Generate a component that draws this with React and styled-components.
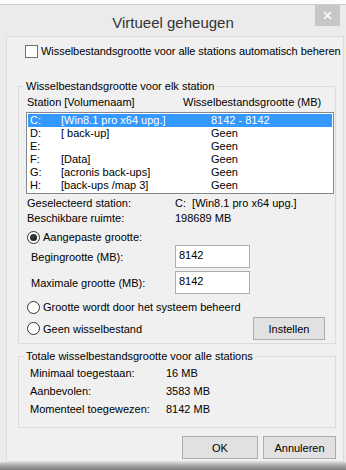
import React from "react";
import styled, { createGlobalStyle } from "styled-components";

const GlobalStyle = createGlobalStyle`
  html, body { margin: 0; padding: 0; background: #fdfdfd; }
  body { font-family: "Liberation Sans", Arial, sans-serif; font-size: 11px; color: #000; }
  * { box-sizing: border-box; }
`;

const Screen = styled.div`
  width: 346px;
  height: 470px;
  overflow: hidden;
  padding-top: 4px;
  background: #fdfdfd;
`;

const Window = styled.div`
  height: 466px;
  background: #ebebeb;
  border-top: 1px solid #cdcdcd;
  display: flex;
  flex-direction: column;
`;

const TitleBar = styled.div`
  height: 31px;
  flex: none;
  display: grid;
  grid-template-columns: 1fr auto 1fr;
`;

const Title = styled.div`
  font-size: 15px;
  color: #333;
  padding-top: 9px;
  line-height: 18px;
`;

const CloseButton = styled.div`
  justify-self: end;
  margin-right: 6px;
  width: 25px;
  height: 21px;
  background: #c7c7c7;
  display: flex;
  align-items: center;
  justify-content: center;
`;

const Panel = styled.div`
  flex: none;
  height: 426px;
  margin: 0 2px 0 6px;
  background: #f0f0f0;
  border: 1px solid #dcdcdc;
  display: flex;
  flex-direction: column;
`;

const CheckRow = styled.div`
  margin: 8px 0 0 18px;
  height: 13px;
  display: flex;
  align-items: center;
  gap: 3px;
  line-height: 13px;
  white-space: nowrap;
  letter-spacing: -0.05px;
`;

const CheckBox = styled.span`
  width: 13px;
  height: 13px;
  flex: none;
  background: #fff;
  border: 1px solid #707070;
`;

const Group = styled.fieldset`
  margin: ${(p) => p.$top}px 0 0 11px;
  width: 318px;
  border: 1px solid #dcdcdc;
  padding: 0 0 ${(p) => p.$bottom}px 0;
  min-width: 0;
`;

const Legend = styled.legend`
  margin-left: 5px;
  padding: 0 2px;
  line-height: 14px;
`;

const GroupBody = styled.div`
  padding-left: ${(p) => p.$left}px;
`;

const HeaderRow = styled.div`
  display: grid;
  grid-template-columns: 156px 1fr;
  margin-top: 3px;
  line-height: 13px;
`;

const ListBox = styled.div`
  margin: 3px 0 0 -1px;
  width: 308px;
  background: #fff;
  border: 1px solid #828790;
  padding: 1px;
`;

const ListRow = styled.div`
  height: 13px;
  line-height: 13px;
  display: grid;
  grid-template-columns: 31px 150px 1fr;
  padding-left: 2px;
  white-space: pre;
  background: ${(p) => (p.$selected ? "#3399ff" : "transparent")};
  color: ${(p) => (p.$selected ? "#fff" : "#000")};
`;

const InfoGrid = styled.div`
  display: grid;
  grid-template-columns: ${(p) => p.$col}px 1fr;
  grid-auto-rows: ${(p) => p.$row}px;
  line-height: ${(p) => p.$row}px;
  margin-top: ${(p) => p.$top}px;
  padding-left: ${(p) => p.$left || 0}px;
  white-space: pre;
`;

const RadioRow = styled.div`
  margin-top: ${(p) => p.$top}px;
  height: 15px;
  display: flex;
  align-items: center;
  gap: 3px;
  line-height: 15px;
`;

const Radio = styled.span`
  width: 13px;
  height: 13px;
  flex: none;
  border-radius: 50%;
  background: #fff;
  border: 1px solid #333;
  display: flex;
  align-items: center;
  justify-content: center;
  &::after {
    content: "";
    display: ${(p) => (p.$checked ? "block" : "none")};
    width: 7px;
    height: 7px;
    border-radius: 50%;
    background: radial-gradient(circle at 40% 40%, #444, #0d0d0d);
  }
`;

const FieldRow = styled.div`
  display: grid;
  grid-template-columns: 144px 75px;
  align-items: center;
  padding-left: 4px;
  margin-top: ${(p) => p.$top}px;
`;

const SizeInput = styled.input`
  width: 75px;
  height: 23px;
  border: 1px solid #abadb3;
  background: #fff;
  font: inherit;
  color: #000;
  padding: 0 0 3px 3px;
  margin: 0;
  outline: none;
`;

const BottomRow = styled.div`
  margin-top: 2px;
  height: 23px;
  display: flex;
  align-items: center;
  justify-content: space-between;
  padding-right: 10px;
`;

const RadioLabel = styled.div`
  display: flex;
  align-items: center;
  gap: 3px;
`;

const Button = styled.div`
  width: ${(p) => p.$w}px;
  height: 23px;
  background: #e1e1e1;
  border: 1px solid #adadad;
  display: flex;
  align-items: center;
  justify-content: center;
  line-height: 14px;
`;

const ButtonBar = styled.div`
  margin-top: 8px;
  display: flex;
  justify-content: flex-end;
  gap: 5px;
  padding-right: 7px;
`;

const Shadow = styled.div`
  flex: 1;
  background: linear-gradient(to bottom, #d8d8d8 0%, #a4a4a4 45%, #7f7f7f 100%);
`;

const drives = [
  ["C:", "[Win8.1 pro x64 upg.]", "8142 - 8142", true],
  ["D:", "[ back-up]", "Geen"],
  ["E:", "", "Geen"],
  ["F:", "[Data]", "Geen"],
  ["G:", "[acronis back-ups]", "Geen"],
  ["H:", "[back-ups /map 3]", "Geen"],
];

export default function App() {
  return (
    <Screen>
      <GlobalStyle />
      <Window>
        <TitleBar>
          <span />
          <Title>Virtueel geheugen</Title>
          <CloseButton>
            <svg width="9" height="9" viewBox="0 0 9 9">
              <path d="M1 1 L8 8 M8 1 L1 8" stroke="#fff" strokeWidth="1.6" />
            </svg>
          </CloseButton>
        </TitleBar>
        <Panel>
          <CheckRow>
            <CheckBox />
            <span>Wisselbestandsgrootte voor alle stations automatisch beheren</span>
          </CheckRow>

          <Group $top={21} $bottom={3}>
            <Legend>Wisselbestandsgrootte voor elk station</Legend>
            <GroupBody $left={8}>
              <HeaderRow>
                <span>Station [Volumenaam]</span>
                <span>Wisselbestandsgrootte (MB)</span>
              </HeaderRow>
              <ListBox>
                {drives.map(([d, n, s, sel]) => (
                  <ListRow key={d} $selected={sel}>
                    <span>{d}</span>
                    <span>{n}</span>
                    <span>{s}</span>
                  </ListRow>
                ))}
              </ListBox>
              <InfoGrid $col={148} $row={15} $top={2}>
                <span>Geselecteerd station:</span>
                <span>C:  [Win8.1 pro x64 upg.]</span>
                <span>Beschikbare ruimte:</span>
                <span>198689 MB</span>
              </InfoGrid>
              <RadioRow $top={4}>
                <Radio $checked />
                <span>Aangepaste grootte:</span>
              </RadioRow>
              <FieldRow $top={0}>
                <span>Begingrootte (MB):</span>
                <SizeInput readOnly defaultValue="8142" />
              </FieldRow>
              <FieldRow $top={3}>
                <span>Maximale grootte (MB):</span>
                <SizeInput readOnly defaultValue="8142" />
              </FieldRow>
              <RadioRow $top={6}>
                <Radio />
                <span>Grootte wordt door het systeem beheerd</span>
              </RadioRow>
              <BottomRow>
                <RadioLabel>
                  <Radio />
                  <span>Geen wisselbestand</span>
                </RadioLabel>
                <Button $w={72}>Instellen</Button>
              </BottomRow>
            </GroupBody>
          </Group>

          <Group $top={5} $bottom={9}>
            <Legend>Totale wisselbestandsgrootte voor alle stations</Legend>
            <InfoGrid $col={136} $row={18} $top={1} $left={11}>
              <span>Minimaal toegestaan:</span>
              <span>16 MB</span>
              <span>Aanbevolen:</span>
              <span>3583 MB</span>
              <span>Momenteel toegewezen:</span>
              <span>8142 MB</span>
            </InfoGrid>
          </Group>

          <ButtonBar>
            <Button $w={76}>OK</Button>
            <Button $w={73}>Annuleren</Button>
          </ButtonBar>
        </Panel>
        <Shadow />
      </Window>
    </Screen>
  );
}
